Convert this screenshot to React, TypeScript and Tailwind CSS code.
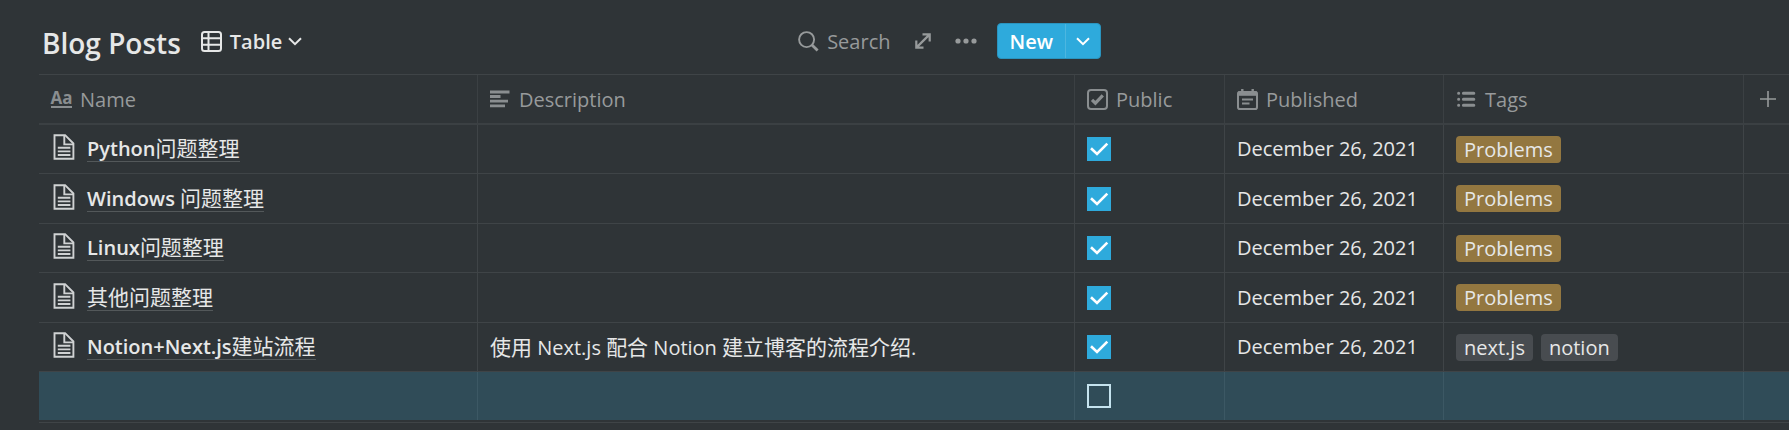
import React from 'react';

type Tag = { label: string; tone: 'yellow' | 'gray' };
type Post = { name: string; description: string; published: string; tags: Tag[] };

const problems: Tag = { label: 'Problems', tone: 'yellow' };
const date = 'December 26, 2021';
const posts: Post[] = [
  { name: 'Python问题整理', description: '', published: date, tags: [problems] },
  { name: 'Windows 问题整理', description: '', published: date, tags: [problems] },
  { name: 'Linux问题整理', description: '', published: date, tags: [problems] },
  { name: '其他问题整理', description: '', published: date, tags: [problems] },
  {
    name: 'Notion+Next.js建站流程',
    description: '使用 Next.js 配合 Notion 建立博客的流程介绍.',
    published: date,
    tags: [{ label: 'next.js', tone: 'gray' }, { label: 'notion', tone: 'gray' }],
  },
];

const tones = { yellow: 'bg-[#937740]', gray: 'bg-[#484c50]' };

/* Latin runs are bold in titles while Chinese runs keep the regular weight. */
function Mixed({ text, bold = false }: { text: string; bold?: boolean }) {
  return (
    <>
      {text.split(/([\u4e00-\u9fff]+)/).filter(Boolean).map((run, i) =>
        /[\u4e00-\u9fff]/.test(run) ? (
          <span key={i} className="text-[21px] font-normal">{run}</span>
        ) : (
          <span key={i} className={bold ? 'font-semibold' : 'font-normal'}>{run}</span>
        ),
      )}
    </>
  );
}

function Chevron() {
  return (
    <svg viewBox="0 0 14 9" className="h-[9px] w-[14px]" fill="none" stroke="currentColor" strokeWidth="2" aria-hidden="true">
      <path d="M1 1.2l6 6 6-6" />
    </svg>
  );
}

function TableIcon() {
  return (
    <svg viewBox="0 0 21 21" className="size-[21px]" fill="none" stroke="currentColor" strokeWidth="2" aria-hidden="true">
      <rect x="1" y="1" width="19" height="19" rx="2.5" />
      <path d="M1 7.3h19M1 13.7h19M7.5 1v19" />
    </svg>
  );
}

function SearchIcon() {
  return (
    <svg viewBox="0 0 21 21" className="size-[21px]" fill="none" stroke="currentColor" aria-hidden="true">
      <circle cx="8.6" cy="8.6" r="7.5" strokeWidth="1.9" />
      <path d="M14 14l5.6 5.6" strokeWidth="2.8" />
    </svg>
  );
}

function ExpandIcon() {
  return (
    <svg viewBox="0 0 16 16" className="size-4" fill="none" stroke="currentColor" strokeWidth="2.2" aria-hidden="true">
      <path d="M7.5 1.3h7.2v7.2M1.3 7.5v7.2h7.2M14.4 1.6L1.6 14.4" />
    </svg>
  );
}

function DotsIcon() {
  return (
    <svg viewBox="0 0 22 6" className="h-[6px] w-[22px]" fill="currentColor" aria-hidden="true">
      <circle cx="3" cy="3" r="2.6" />
      <circle cx="11" cy="3" r="2.6" />
      <circle cx="19" cy="3" r="2.6" />
    </svg>
  );
}

function TitleIcon() {
  return (
    <span aria-hidden="true" className="flex w-[21px] justify-center border-b-2 border-current text-[17px] leading-4 font-bold">
      Aa
    </span>
  );
}

function TextIcon() {
  return (
    <svg viewBox="0 0 21 21" className="size-[21px]" stroke="currentColor" strokeWidth="2.8" aria-hidden="true">
      <path d="M0 3h19.5M0 7.5h10.5M0 12.2h18M0 16.8h15" />
    </svg>
  );
}

function CheckboxIcon() {
  return (
    <svg viewBox="0 0 21 21" className="size-[21px]" fill="none" stroke="currentColor" aria-hidden="true">
      <rect x="1" y="1" width="19" height="19" rx="3" strokeWidth="2" />
      <path d="M5 10.8l3.4 3.4 7.4-7.8" strokeWidth="3.2" />
    </svg>
  );
}

function DateIcon() {
  return (
    <svg viewBox="0 0 21 21" className="size-[21px]" fill="none" stroke="currentColor" strokeWidth="2" aria-hidden="true">
      <rect x="1" y="3" width="19" height="17" rx="1.8" />
      <path d="M1 4.6h19" strokeWidth="4.4" />
      <path d="M5.3 0v4M15.7 0v4" strokeWidth="2.4" />
      <path d="M5 10.4h11M5 14.6h7.5" />
    </svg>
  );
}

function ListIcon() {
  return (
    <svg viewBox="0 0 21 21" className="size-[21px]" fill="none" stroke="currentColor" strokeWidth="3" strokeLinecap="round" aria-hidden="true">
      <path d="M7.4 4.2h10.4M7.4 10.2h10.4M7.4 16.2h10.4" />
      <path d="M2.6 4.2h.1M2.6 10.2h.1M2.6 16.2h.1" />
    </svg>
  );
}

function PageIcon() {
  return (
    <svg viewBox="0 0 22 26" className="h-[26px] w-[22px]" fill="none" stroke="currentColor" strokeWidth="1.9" aria-hidden="true">
      <path d="M1.5 1.2h10.6l8.3 8.3v15.3H1.5z" />
      <path d="M11.3 1.2v9.2h9.1" />
      <path d="M4.8 13.8h12.6M4.8 17.4h12.6M4.8 21h12.6" />
    </svg>
  );
}

function Check({ checked, label }: { checked: boolean; label: string }) {
  return (
    <label className="grid w-6 grid-cols-1 grid-rows-1">
      <input
        type="checkbox"
        defaultChecked={checked}
        aria-label={label}
        className="peer col-start-1 row-start-1 size-6 appearance-none border-2 border-[#c5e3ee] checked:border-[#2eaadc] checked:bg-[#2eaadc]"
      />
      <svg
        viewBox="0 0 24 24"
        className="pointer-events-none invisible col-start-1 row-start-1 size-6 text-white peer-checked:visible"
        fill="none"
        stroke="currentColor"
        strokeWidth="2.6"
        aria-hidden="true"
      >
        <path d="M4 11.3l6 5.7L20.3 6.6" />
      </svg>
    </label>
  );
}

const columns = [
  { title: 'Name', icon: <TitleIcon /> },
  { title: 'Description', icon: <TextIcon /> },
  { title: 'Public', icon: <CheckboxIcon /> },
  { title: 'Published', icon: <DateIcon /> },
  { title: 'Tags', icon: <ListIcon /> },
];

const cell = 'border-r border-b border-[#3f4447] px-3 py-0 align-middle';
const newCell = 'border-r border-[#3c5864] px-3 py-0 align-middle';

export default function App() {
  return (
    <main className="min-h-screen overflow-x-hidden bg-[#2f3437] font-['Open_Sans','Noto_Sans_CJK_SC',sans-serif] text-[20px] leading-6 text-[#e6e7e7]">
      <header className="flex h-[74px] max-w-[1101px] items-center justify-between pt-2 pl-[42px]">
        <div className="flex items-center gap-5">
          <h1 className="pt-1 text-[28px] leading-9 font-semibold">Blog Posts</h1>
          <button type="button" className="flex items-center gap-2 font-semibold">
            <TableIcon />
            <span className="flex items-center gap-[6px]">
              <span className="pt-[2px]">Table</span>
              <Chevron />
            </span>
          </button>
        </div>
        <div className="flex items-center gap-5 text-[#979a9b]">
          <div className="flex items-center gap-6">
            <button type="button" className="flex items-center gap-2">
              <SearchIcon />
              <span className="pt-[2px]">Search</span>
            </button>
            <button type="button" aria-label="Open as page"><ExpandIcon /></button>
            <button type="button" aria-label="More options"><DotsIcon /></button>
          </div>
          <div className="flex h-9 items-stretch overflow-hidden rounded border border-[#2a94bf] bg-[#2eaadc] text-white">
            <button type="button" className="px-3 pt-[2px] font-semibold">New</button>
            <button type="button" aria-label="New from template" className="flex w-[35px] items-center justify-center border-l border-[#4db6e0]">
              <Chevron />
            </button>
          </div>
        </div>
      </header>

      <div className="pl-[39px]">
        <table className="w-full table-fixed border-separate border-spacing-0 border-t border-b border-[#3f4447] pb-[2px]">
          <colgroup>
            <col className="w-[439px]" />
            <col className="w-[597px]" />
            <col className="w-[150px]" />
            <col className="w-[219px]" />
            <col className="w-[300px]" />
            <col />
          </colgroup>
          <thead>
            <tr className="h-[50px] text-[#979a9b]">
              {columns.map((c) => (
                <th key={c.title} scope="col" className="border-r border-b-2 border-[#3b4043] px-3 py-0 text-left font-normal">
                  <span className="flex items-center gap-2">
                    <span className="text-[#8a8e90]">{c.icon}</span>
                    <span className="pt-[2px]">{c.title}</span>
                  </span>
                </th>
              ))}
              <th scope="col" className="border-b-2 border-[#3b4043] p-0 pl-4 text-left">
                <button type="button" aria-label="Add a property" className="block">
                  <svg viewBox="0 0 16 16" className="size-4" stroke="currentColor" strokeWidth="1.6" aria-hidden="true">
                    <path d="M8 0v16M0 8h16" />
                  </svg>
                </button>
              </th>
            </tr>
          </thead>
          <tbody>
            {posts.map((p) => (
              <tr key={p.name} className="h-[49px] even:h-[50px]">
                <td className={cell}>
                  <a href="#" className="flex items-center gap-3 pl-[2px]">
                    <span className="shrink-0 pb-1 text-[#d0d2d3]"><PageIcon /></span>
                    <span className="border-b border-[#53585a] leading-6">
                      <Mixed text={p.name} bold />
                    </span>
                  </a>
                </td>
                <td className={cell}><Mixed text={p.description} /></td>
                <td className={cell}><Check checked label={`Public: ${p.name}`} /></td>
                <td className={cell}>{p.published}</td>
                <td className={cell}>
                  <span className="flex gap-2">
                    {p.tags.map((t) => (
                      <span key={t.label} className={`h-[27px] rounded px-2 leading-[28px] ${tones[t.tone]}`}>{t.label}</span>
                    ))}
                  </span>
                </td>
                <td className="border-b border-[#3f4447]" />
              </tr>
            ))}
            <tr className="h-[48px] bg-[#304c58]">
              <td className={newCell} />
              <td className={newCell} />
              <td className={newCell}><Check checked={false} label="Public: new post" /></td>
              <td className={newCell} />
              <td className={newCell} />
              <td />
            </tr>
          </tbody>
        </table>
      </div>
    </main>
  );
}
